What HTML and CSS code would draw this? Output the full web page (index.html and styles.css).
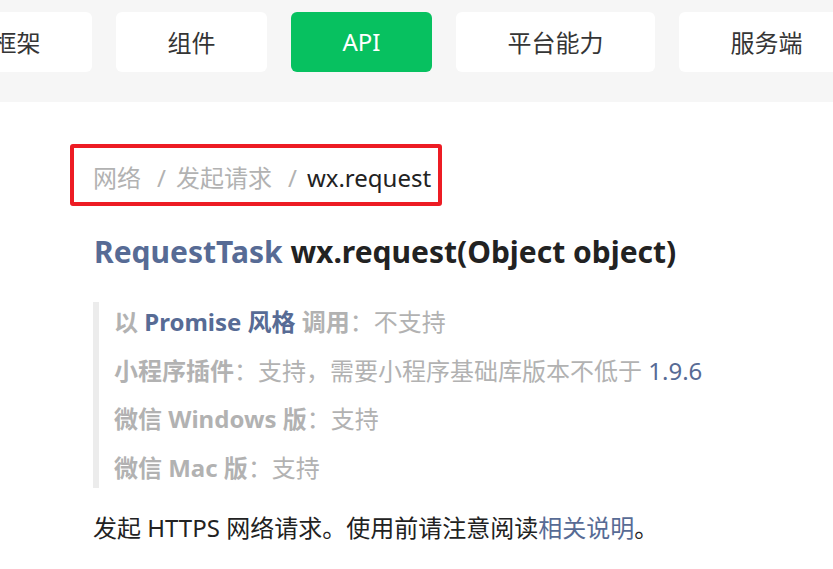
FILE: index.html
```html
<!DOCTYPE html>
<html lang="zh-CN">
<head>
<meta charset="utf-8">
<title>wx.request</title>
<link rel="stylesheet" href="styles.css">
</head>
<body>
<header class="tabs-bar">
  <nav class="tabs">
    <a class="tab">框架</a>
    <a class="tab">组件</a>
    <a class="tab tab-active">API</a>
    <a class="tab">平台能力</a>
    <a class="tab">服务端</a>
  </nav>
</header>
<main class="content">
  <div class="crumb-box">
    <nav class="crumbs">
      <span class="crumb">网络</span><span class="sep">/</span><span class="crumb">发起请求</span><span class="sep">/</span><span class="crumb crumb-current">wx.request</span>
    </nav>
  </div>
  <h1 class="title"><span class="link">RequestTask</span> wx.request(Object object)</h1>
  <blockquote class="notes">
    <p><strong>以 <span class="link">Promise 风格</span> 调用</strong>：不支持</p>
    <p><strong>小程序插件</strong>：支持，需要小程序基础库版本不低于 <span class="link-plain">1.9.6</span></p>
    <p><strong>微信 Windows 版</strong>：支持</p>
    <p><strong>微信 Mac 版</strong>：支持</p>
  </blockquote>
  <p class="desc">发起 HTTPS 网络请求。使用前请注意阅读<span class="link-plain">相关说明</span>。</p>
</main>
</body>
</html>
```

FILE: styles.css
```css
html, body {
  margin: 0;
  padding: 0;
  background: #fff;
}
body {
  font-family: "Noto Sans", "Noto Sans CJK SC", sans-serif;
  color: #222;
  overflow: hidden;
}
.tabs-bar {
  background: #f6f6f6;
  height: 102px;
  overflow: hidden;
}
.tabs {
  display: flex;
  gap: 24px;
  padding-top: 12px;
  margin-left: -59px;
}
.tab {
  flex: none;
  height: 60px;
  padding: 0 51.5px 1px;
  display: flex;
  align-items: center;
  justify-content: center;
  background: #fff;
  border-radius: 6px;
  font-size: 24px;
  color: #353535;
  font-family: "Noto Sans", "Noto Sans CJK SC", sans-serif;
  box-sizing: border-box;
}
.tab-active {
  background: #07c160;
  color: #fff;
}
.content {
  padding-left: 93px;
}
.crumb-box {
  display: inline-block;
  margin-top: 42px;
  margin-left: -23px;
  border: 4px solid #ed1c24;
  border-radius: 3px;
  padding: 14px 7px 8px 19px;
}
.crumbs {
  font-size: 24px;
  line-height: 32px;
  color: #b2b2b2;
  display: flex;
  align-items: baseline;
}
.sep {
  margin: 0 10px 0 16px;
  color: #b2b2b2;
}
.crumb-current {
  color: #222;
}
.title {
  margin: 26px 0 0 1px;
  font-size: 30px;
  line-height: 40px;
  font-weight: 700;
  color: #222;
}
.link, .link-plain {
  color: #576b95;
}
.notes {
  margin: 30px 0 0 0;
  padding: 1px 0 1px 15px;
  border-left: 6px solid #ececec;
  color: #b2b2b2;
}
.notes p {
  margin: 0;
  font-size: 24px;
  line-height: 38px;
}
.notes p + p {
  margin-top: 10.5px;
}
.notes strong {
  font-weight: 700;
}
.desc {
  margin: 24px 0 0 0;
  font-size: 24px;
  line-height: 32px;
  color: #222;
}
```
